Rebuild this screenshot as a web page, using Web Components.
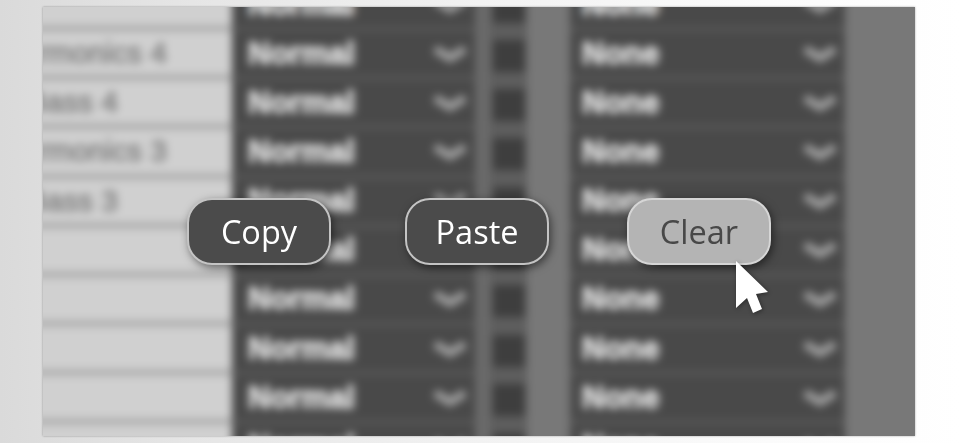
<!DOCTYPE html>
<html>
<head>
<meta charset="utf-8">
<title>Copy Paste Clear</title>
<style>
  html, body { margin: 0; height: 100%; }
  body { width: 960px; height: 443px; overflow: hidden; }
</style>
</head>
<body>
<slide-stage>
  <blur-table>
    <mix-row name="" pad="65"></mix-row>
    <mix-row name="Harmonics 4" pad="65"></mix-row>
    <mix-row name="Bass 4" pad="114"></mix-row>
    <mix-row name="Harmonics 3" pad="65"></mix-row>
    <mix-row name="Bass 3" pad="114"></mix-row>
    <mix-row name="" pad="65"></mix-row>
    <mix-row name="" pad="65"></mix-row>
    <mix-row name="" pad="65"></mix-row>
    <mix-row name="" pad="65"></mix-row>
    <mix-row name="" pad="65"></mix-row>
  </blur-table>
  <action-bar slot="over">
    <glass-button>Copy</glass-button>
    <glass-button>Paste</glass-button>
    <glass-button active>Clear<arrow-cursor></arrow-cursor></glass-button>
  </action-bar>
</slide-stage>

<script>
  class SlideStage extends HTMLElement {
    connectedCallback() {
      this.attachShadow({ mode: "open" }).innerHTML = `
        <style>
          :host {
            display: block;
            box-sizing: border-box;
            width: 960px;
            height: 443px;
            padding: 7px 45px 7px 43px;
            background: linear-gradient(90deg, #dadada 0%, #e6e6e6 20%, #f2f2f2 50%, #fbfbfb 80%, #ffffff 100%);
          }
          .panel {
            position: relative;
            height: 429px;
            overflow: hidden;
            background: #777;
            box-shadow: 0 0 2px rgba(0,0,0,0.35);
          }
        </style>
        <div class="panel">
          <slot></slot>
          <slot name="over"></slot>
        </div>`;
    }
  }

  class BlurTable extends HTMLElement {
    connectedCallback() {
      this.attachShadow({ mode: "open" }).innerHTML = `
        <style>
          :host {
            display: block;
            margin: -25px -20px 0 -20px;
            filter: blur(4.5px);
          }
        </style>
        <slot></slot>`;
    }
  }

  class MixRow extends HTMLElement {
    connectedCallback() {
      const name = this.getAttribute("name") || "";
      const pad = this.getAttribute("pad") || "65";
      this.attachShadow({ mode: "open" }).innerHTML = `
        <style>
          :host {
            display: grid;
            grid-template-columns: 209px 243px 15px 37px 43px 275px 90px;
            height: 49.15px;
            font: 400 30px "Liberation Sans", sans-serif;
          }
          .cell { display: flex; align-items: center; overflow: hidden; white-space: nowrap; }
          .name {
            justify-content: flex-end;
            box-sizing: border-box;
            padding-right: ${pad}px;
            background: #d0d0d0;
            color: #808080;
            -webkit-text-stroke: 1px #808080;
            border-bottom: 5px solid #a4a4a4;
          }
          .select {
            box-sizing: border-box;
            background: #494949;
            color: #dcdcdc;
            -webkit-text-stroke: 1.5px #dcdcdc;
            font-size: 31px;
            font-weight: 700;
            border-bottom: 4px solid #5a5a5a;
            justify-content: space-between;
          }
          .mode { padding: 0 0 0 16px; }
          .kind { padding: 0 0 0 12px; }
          .select svg { flex: none; margin-right: 7px; }
          .gap { background: #6a6a6a; }
          .check { background: #5e5e5e; justify-content: center; }
          .check i { display: block; width: 32px; height: 32px; background: #3e3e3e; }
          .light { background: #787878; }
        </style>
        <div class="cell name">${name}</div>
        <div class="cell select mode"><span>Normal</span>${MixRow.chevron}</div>
        <div class="cell gap"></div>
        <div class="cell check"><i></i></div>
        <div class="cell light"></div>
        <div class="cell select kind"><span>None</span>${MixRow.chevron}</div>
        <div class="cell light"></div>`;
    }
    static get chevron() {
      return `<svg width="36" height="20" viewBox="0 0 36 20"><path d="M3 5 L18 14 L33 5" fill="none" stroke="#a0a0a0" stroke-width="8"/></svg>`;
    }
  }

  class ActionBar extends HTMLElement {
    connectedCallback() {
      this.attachShadow({ mode: "open" }).innerHTML = `
        <style>
          :host {
            position: absolute;
            left: 144px;
            top: 191px;
            display: flex;
            gap: 74px;
          }
        </style>
        <slot></slot>`;
    }
  }

  class GlassButton extends HTMLElement {
    connectedCallback() {
      this.attachShadow({ mode: "open" }).innerHTML = `
        <style>
          :host {
            position: relative;
            display: flex;
            align-items: center;
            justify-content: center;
            box-sizing: border-box;
            width: 144px;
            height: 67px;
            border: 2px solid #c4c4c4;
            border-radius: 25px;
            background: #4b4b4b;
            color: #ffffff;
            font: 400 32.5px "Open Sans", sans-serif;
            box-shadow: 2px 3px 9px rgba(0,0,0,0.5);
          }
          :host([active]) {
            margin-left: 4px;
            background: #b4b4b4;
            border-color: #d6d6d6;
            color: #484848;
          }
        </style>
        <slot></slot>`;
    }
  }

  class ArrowCursor extends HTMLElement {
    connectedCallback() {
      this.attachShadow({ mode: "open" }).innerHTML = `
        <style>
          :host {
            position: absolute;
            left: 107px;
            top: 61px;
            display: block;
            width: 34px;
            height: 54px;
            filter: drop-shadow(1px 1px 2px rgba(0,0,0,0.4));
          }
          svg { display: block; }
        </style>
        <svg width="34" height="54" viewBox="0 0 34 54"><path d="M0 0 L32 31 L20 33 L26 48 L17 52 L11 37 L0 47Z" fill="#ffffff"/></svg>`;
    }
  }

  customElements.define("slide-stage", SlideStage);
  customElements.define("blur-table", BlurTable);
  customElements.define("mix-row", MixRow);
  customElements.define("action-bar", ActionBar);
  customElements.define("glass-button", GlassButton);
  customElements.define("arrow-cursor", ArrowCursor);
</script>
</body>
</html>
